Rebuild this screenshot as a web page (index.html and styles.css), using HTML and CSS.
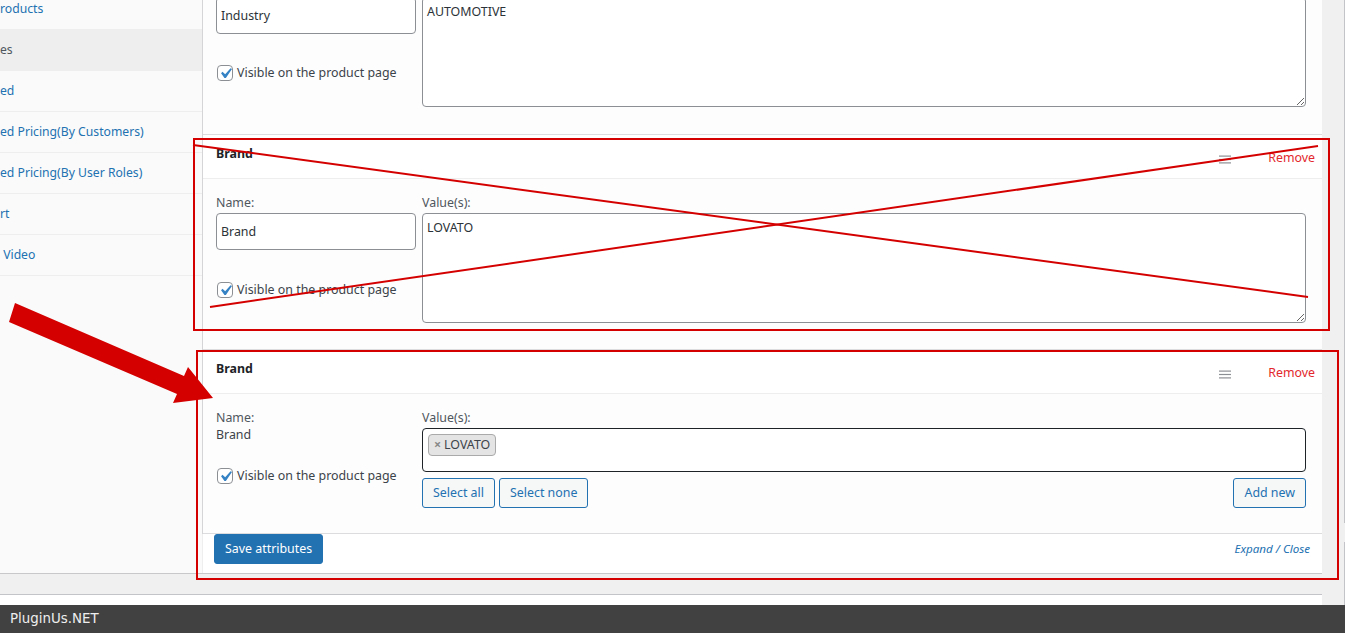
FILE: index.html
```html
<!DOCTYPE html>
<html lang="en">
<head>
<meta charset="utf-8">
<title>Product attributes</title>
<link rel="stylesheet" href="styles.css">
</head>
<body>
<div class="screen">
  <div class="page">
    <div class="main-col">
      <div class="metabox">
        <ul class="tabs">
          <li class="tab"><span class="tab-link">roducts</span></li>
          <li class="tab active"><span class="tab-link">es</span></li>
          <li class="tab"><span class="tab-link">ed</span></li>
          <li class="tab"><span class="tab-link">ed Pricing(By Customers)</span></li>
          <li class="tab"><span class="tab-link">ed Pricing(By User Roles)</span></li>
          <li class="tab"><span class="tab-link">rt</span></li>
          <li class="tab"><span class="tab-link">&nbsp;Video</span></li>
        </ul>
        <div class="panel">
          <div class="attrs">
            <div class="attr attr-first">
              <div class="attr-body">
                <div class="col-name">
                  <div class="label-spacer"></div>
                  <input class="text-input" type="text" value="Industry">
                  <div class="visible visible-input">
                    <svg class="cb" width="16" height="16" viewBox="0 0 16 16"><rect x="0.5" y="0.5" width="15" height="15" rx="3.5" fill="#fff" stroke="#8c8f94"/><path d="M13.57 3.13L14.98 4.12L8.88 12.92H7.47L4.07 8.15L5.48 6.84L8.17 9.36Z" fill="#3582c4"/></svg>
                    <span>Visible on the product page</span>
                  </div>
                </div>
                <div class="col-value">
                  <div class="label-spacer"></div>
                  <textarea class="values values-first">AUTOMOTIVE</textarea>
                </div>
              </div>
            </div>

            <div class="attr">
              <div class="attr-head">
                <strong class="attr-title">Brand</strong>
                <svg class="handle" width="12" height="9" viewBox="0 0 12 9"><rect x="0" y="0.5" width="12" height="1.2" fill="#8c8f94"/><rect x="0" y="3.9" width="12" height="1.2" fill="#8c8f94"/><rect x="0" y="7.3" width="12" height="1.2" fill="#8c8f94"/></svg>
                <span class="remove">Remove</span>
              </div>
              <div class="attr-body">
                <div class="col-name">
                  <div class="label">Name:</div>
                  <input class="text-input" type="text" value="Brand">
                  <div class="visible visible-input">
                    <svg class="cb" width="16" height="16" viewBox="0 0 16 16"><rect x="0.5" y="0.5" width="15" height="15" rx="3.5" fill="#fff" stroke="#8c8f94"/><path d="M13.57 3.13L14.98 4.12L8.88 12.92H7.47L4.07 8.15L5.48 6.84L8.17 9.36Z" fill="#3582c4"/></svg>
                    <span>Visible on the product page</span>
                  </div>
                </div>
                <div class="col-value">
                  <div class="label">Value(s):</div>
                  <textarea class="values">LOVATO</textarea>
                </div>
              </div>
            </div>

            <div class="attr attr-last">
              <div class="attr-head">
                <strong class="attr-title">Brand</strong>
                <svg class="handle" width="12" height="9" viewBox="0 0 12 9"><rect x="0" y="0.5" width="12" height="1.2" fill="#8c8f94"/><rect x="0" y="3.9" width="12" height="1.2" fill="#8c8f94"/><rect x="0" y="7.3" width="12" height="1.2" fill="#8c8f94"/></svg>
                <span class="remove">Remove</span>
              </div>
              <div class="attr-body">
                <div class="col-name">
                  <div class="label">Name:</div>
                  <div class="name-static">Brand</div>
                  <div class="visible visible-static">
                    <svg class="cb" width="16" height="16" viewBox="0 0 16 16"><rect x="0.5" y="0.5" width="15" height="15" rx="3.5" fill="#fff" stroke="#8c8f94"/><path d="M13.57 3.13L14.98 4.12L8.88 12.92H7.47L4.07 8.15L5.48 6.84L8.17 9.36Z" fill="#3582c4"/></svg>
                    <span>Visible on the product page</span>
                  </div>
                </div>
                <div class="col-value">
                  <div class="label">Value(s):</div>
                  <div class="select-box">
                    <span class="chip"><span class="chip-x">×</span>LOVATO</span>
                  </div>
                  <div class="btn-row">
                    <span class="btn">Select all</span>
                    <span class="btn">Select none</span>
                    <span class="btn btn-right">Add new</span>
                  </div>
                </div>
              </div>
            </div>
          </div>
          <div class="toolbar">
            <span class="btn-primary">Save attributes</span>
            <span class="expand">Expand / Close</span>
          </div>
        </div>
      </div>
      <div class="gap"></div>
      <div class="metabox2"></div>
    </div>
    <div class="side-col">
      <div class="side-box side-box-top"></div>
      <div class="side-box side-box-bottom"></div>
    </div>
  </div>
  <div class="footerbar">PluginUs.NET</div>

  <svg class="annot" width="1345" height="633" viewBox="0 0 1345 633">
    <rect x="194" y="139" width="1135" height="191" fill="none" stroke="#d40000" stroke-width="2"/>
    <line x1="193" y1="145" x2="1308" y2="297" stroke="#d40000" stroke-width="2"/>
    <line x1="210" y1="307" x2="1318" y2="146" stroke="#d40000" stroke-width="2"/>
    <rect x="197" y="351" width="1141" height="228" fill="none" stroke="#d40000" stroke-width="2"/>
    <polygon points="15,303 184,376 188,367 213,398 173,403 177,394 9,322" fill="#d40000"/>
  </svg>
</div>
</body>
</html>
```
FILE: styles.css
```css
* { box-sizing: border-box; }

body {
  margin: 0;
  background: #f0f0f1;
  font-family: "Noto Sans", "Open Sans", sans-serif;
  font-size: 12.4px;
  color: #3c434a;
}

.screen {
  position: relative;
  width: 1345px;
  height: 633px;
  overflow: hidden;
  display: flex;
  flex-direction: column;
}

.page {
  flex: 1;
  display: flex;
  overflow: hidden;
}

.main-col {
  width: 1322px;
  flex-shrink: 0;
  display: flex;
  flex-direction: column;
}

.side-col {
  flex: 1;
  margin-left: 22px;
  display: flex;
  flex-direction: column;
}

.side-box {
  border-left: 1px solid #c3c4c7;
  background: #fff;
}

.side-box-top {
  height: 523px;
  border-bottom: 1px solid #c3c4c7;
}

.side-box-bottom {
  margin-top: 19px;
  flex: 1;
  border-top: 1px solid #c3c4c7;
}

.metabox {
  height: 574px;
  flex-shrink: 0;
  display: flex;
  background: #fdfdfd;
  border-bottom: 1px solid #c8c8cb;
  overflow: hidden;
}

/* sidebar tabs */
.tabs {
  width: 202px;
  flex-shrink: 0;
  margin: 0;
  padding: 0;
  list-style: none;
  background: #fafafa;
}

.tab {
  height: 41px;
  border-bottom: 1px solid #eee;
  line-height: 40px;
  white-space: nowrap;
  overflow: hidden;
  font-size: 12.2px;
}

.tab:first-child { margin-top: -11px; }

.tab-link { color: #2271b1; }

.tab.active { background: #eee; }
.tab.active .tab-link { color: #50575e; }

/* panel */
.panel {
  flex: 1;
  display: flex;
  flex-direction: column;
  min-width: 0;
}

.attrs {
  border-left: 1px solid #d5d5d8;
}

.attr {
  border-bottom: 1px solid #dcdcde;
}

.attr-first { margin-top: -38px; }

.attr-head {
  height: 44px;
  display: flex;
  align-items: flex-start;
  padding: 10px 7px 0 13px;
  background: #fff;
  border-bottom: 1px solid #eee;
}

.attr-title {
  flex: 1;
  line-height: 18px;
  font-weight: 700;
  color: #1d2327;
}

.handle {
  margin-top: 10px;
  margin-right: 37px;
}

.remove {
  margin-top: 4px;
  line-height: 18px;
  color: #e3272d;
}

.attr-body {
  display: flex;
  gap: 6px;
  padding: 15px 16px 26px 13px;
}

.attr-first .attr-body { padding-bottom: 27px; }
.attr-last .attr-body { padding-bottom: 25px; }

.col-name {
  width: 200px;
  flex-shrink: 0;
}

.col-value {
  flex: 1;
  min-width: 0;
}

.label {
  line-height: 18px;
  height: 18px;
  margin-bottom: 1.5px;
  color: #50575e;
}

.label-spacer {
  height: 19.5px;
}

.text-input {
  display: block;
  width: 100%;
  height: 37px;
  margin: 0;
  padding: 0 4px;
  border: 1px solid #8c8f94;
  border-radius: 4px;
  background: #fff;
  font: inherit;
  color: #2c3338;
}

.name-static {
  margin-top: -2.5px;
  line-height: 18px;
  color: #3c434a;
}

.visible {
  display: flex;
  align-items: center;
  gap: 4px;
  line-height: 18px;
  color: #3c434a;
}

.visible-input { margin-top: 30.5px; margin-left: 1px; }
.visible-static { margin-top: 23.5px; margin-left: 1px; }

.cb { flex-shrink: 0; display: block; }

.values {
  display: block;
  width: 100%;
  height: 109.5px;
  margin: 0;
  padding: 5px 4px 4px;
  border: 1px solid #8c8f94;
  border-radius: 4px;
  background: #fff;
  font: inherit;
  line-height: 18px;
  color: #2c3338;
  resize: vertical;
}

.values-first { height: 110px; }

.select-box {
  height: 44px;
  padding: 5px;
  border: 1px solid #1d2327;
  border-radius: 4px;
  background: #fff;
}

.chip {
  display: inline-flex;
  align-items: center;
  height: 22px;
  padding: 0 5px;
  border: 1px solid #aaa;
  border-radius: 4px;
  background: #e4e4e4;
  color: #3c434a;
  line-height: 20px;
}

.chip-x {
  color: #888;
  margin-right: 3px;
  font-weight: 700;
}

.btn-row {
  display: flex;
  gap: 4px;
  margin-top: 6px;
}

.btn {
  height: 30px;
  line-height: 28px;
  padding: 0 10px;
  border: 1px solid #2271b1;
  border-radius: 3px;
  background: #f6f7f7;
  color: #2271b1;
  white-space: nowrap;
}

.btn-right { margin-left: auto; }

.toolbar {
  flex: 1;
  display: flex;
  justify-content: space-between;
  align-items: flex-start;
  padding: 0 12px 0 11px;
  background: #fff;
  border-left: 1px solid #eee;
}

.btn-primary {
  height: 30px;
  line-height: 28px;
  padding: 0 10px;
  border: 1px solid #2271b1;
  border-radius: 3px;
  background: #2271b1;
  color: #fff;
  white-space: nowrap;
}

.expand {
  margin-top: 6px;
  line-height: 18px;
  font-size: 11.6px;
  font-style: italic;
  color: #2271b1;
}

.gap { height: 20px; flex-shrink: 0; }

.metabox2 {
  flex: 1;
  background: #fff;
  border-top: 1px solid #c3c4c7;
}

.footerbar {
  height: 28px;
  flex-shrink: 0;
  background: #414141;
  color: #eee;
  font-family: "DejaVu Sans", sans-serif;
  font-size: 13.4px;
  line-height: 28px;
  padding-left: 10px;
}

.annot {
  position: absolute;
  left: 0;
  top: 0;
  pointer-events: none;
}
```
